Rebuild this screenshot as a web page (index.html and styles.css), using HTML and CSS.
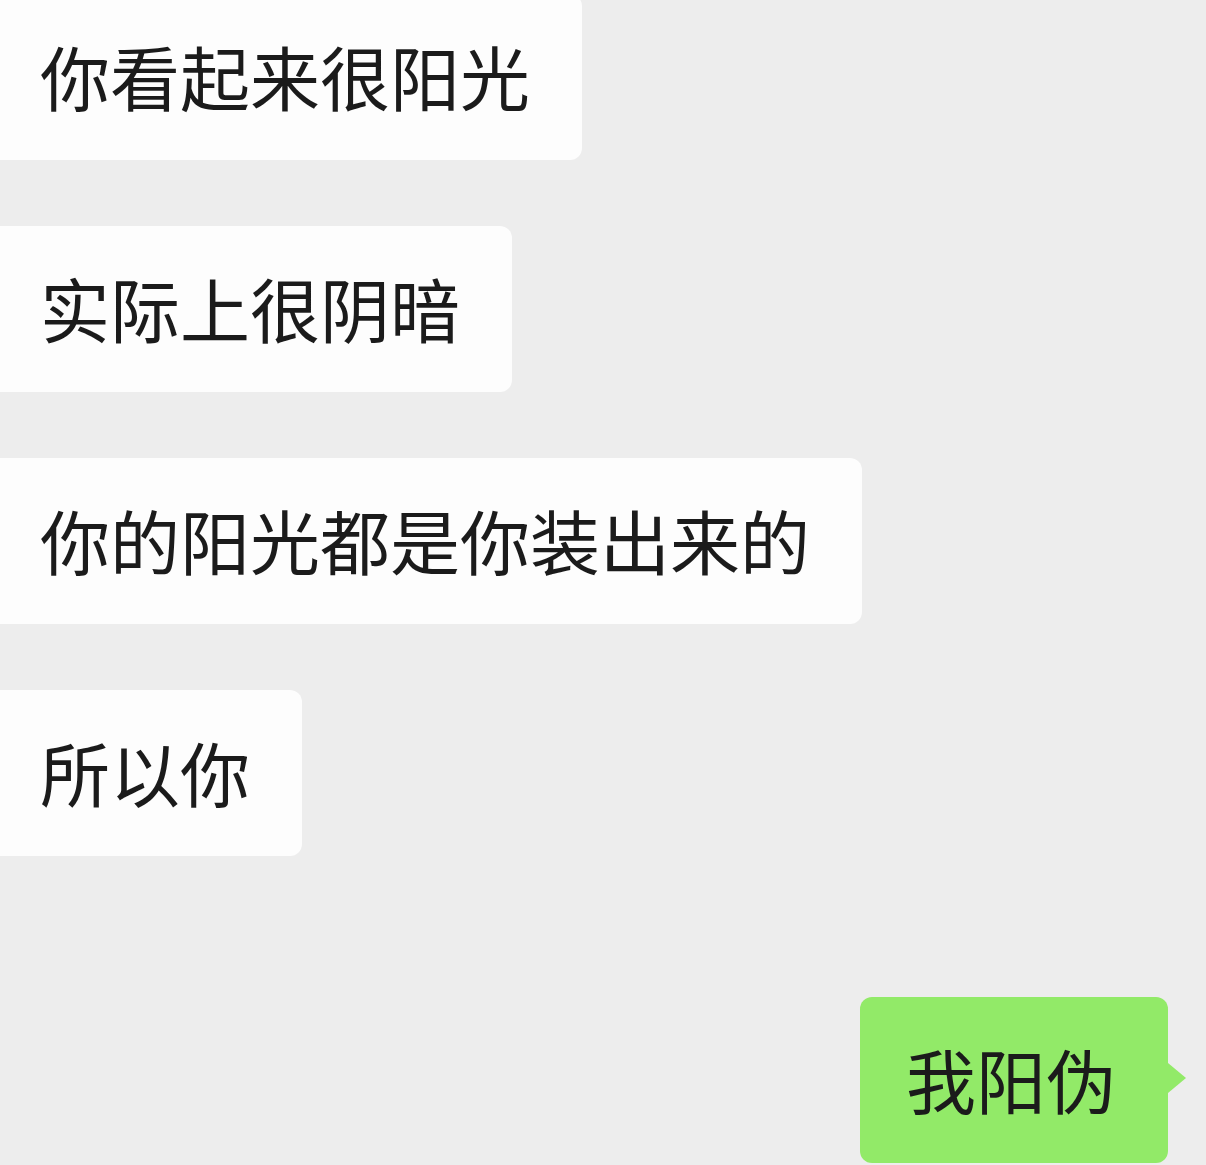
FILE: index.html
```html
<!DOCTYPE html>
<html lang="zh-CN">
<head>
    <meta charset="UTF-8">
    <title>聊天记录</title>
    <link rel="stylesheet" href="styles.css">
</head>
<body>
<div class="chat">
    <div class="bubble bubble-in first">你看起来很阳光</div>
    <div class="bubble bubble-in">实际上很阴暗</div>
    <div class="bubble bubble-in">你的阳光都是你装出来的</div>
    <div class="bubble bubble-in">所以你</div>
    <div class="bubble bubble-out">我阳伪</div>
</div>
</body>
</html>
```

FILE: styles.css
```css
body {
    margin: 0;
    background-color: #ededed;
    font-family: "Noto Sans CJK SC", "Noto Sans", sans-serif;
    color: #1b1b1b;
}
.chat {
    display: flex;
    flex-direction: column;
    align-items: flex-start;
    gap: 66px;
    overflow: hidden;
    height: 1165px;
}
.bubble {
    position: relative;
    font-size: 70px;
    line-height: 98px;
    padding: 33px 52px 35px 40px;
    border-radius: 12px;
    white-space: nowrap;
}
.bubble-in {
    background-color: #fdfdfd;
    border-radius: 0 12px 12px 0;
}
.first {
    margin-top: -6px;
}
.bubble-out {
    align-self: flex-end;
    margin-top: 75px;
    margin-right: 38px;
    padding-left: 46px;
    padding-right: 52px;
    background-color: #92ea68;
}
.bubble-out::after {
    content: "";
    position: absolute;
    right: -18px;
    top: 66px;
    border-style: solid;
    border-width: 15px 0 15px 18px;
    border-color: transparent transparent transparent #92ea68;
}
```
